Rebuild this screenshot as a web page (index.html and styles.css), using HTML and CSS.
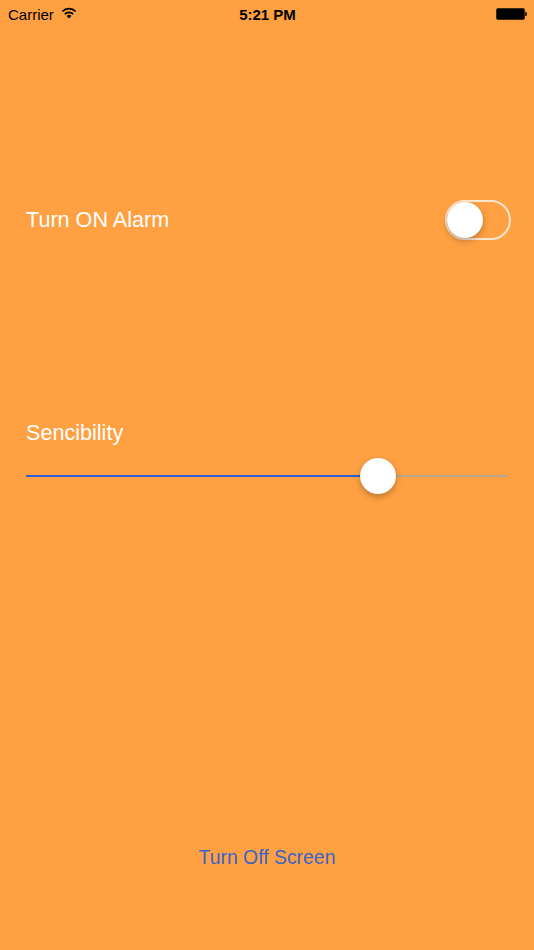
FILE: index.html
```html
<!DOCTYPE html>
<html lang="en">
<head>
    <meta charset="UTF-8">
    <meta name="viewport" content="width=device-width, initial-scale=1.0">
    <title>Alarm</title>
    <link rel="stylesheet" href="styles.css">
</head>
<body>
    <div class="status-bar">
        <div class="status-left">
            <span>Carrier</span>
            <svg class="wifi" width="16" height="12" viewBox="0 0 16 12">
                <path d="M8 11.5 L5.6 8.9 A3.4 3.4 0 0 1 10.4 8.9 Z" fill="#000"/>
                <path d="M3.7 7.1 A6.1 6.1 0 0 1 12.3 7.1" stroke="#000" stroke-width="1.7" fill="none"/>
                <path d="M1.3 4.5 A9.4 9.4 0 0 1 14.7 4.5" stroke="#000" stroke-width="1.7" fill="none"/>
            </svg>
        </div>
        <div class="status-time">5:21 PM</div>
        <div class="status-right">
            <div class="battery"></div>
            <div class="battery-nub"></div>
        </div>
    </div>

    <div class="content">
        <div class="row alarm-row">
            <span class="label">Turn ON Alarm</span>
            <div class="switch">
                <div class="switch-knob"></div>
            </div>
        </div>

        <div class="sensitivity">
            <span class="label">Sencibility</span>
            <div class="slider">
                <div class="slider-fill" style="width: 73%;"></div>
                <div class="slider-rest"></div>
                <div class="slider-thumb" style="left: 73%;"></div>
            </div>
        </div>

        <div class="bottom">
            <button class="link-btn">Turn Off Screen</button>
        </div>
    </div>
</body>
</html>
```

FILE: styles.css
```css
body {
    margin: 0;
    height: 950px;
    background-color: #ffa142;
    font-family: 'Liberation Sans', Arial, sans-serif;
    color: #fff;
    overflow: hidden;
    display: flex;
    flex-direction: column;
}

.status-bar {
    height: 28px;
    display: flex;
    align-items: center;
    justify-content: space-between;
    padding: 0 7px 0 8px;
    color: #000;
    font-size: 15px;
}

.status-left {
    display: flex;
    align-items: center;
    gap: 7px;
    width: 120px;
}

.wifi {
    margin-top: -2px;
}

.status-time {
    font-weight: bold;
    font-size: 15px;
}

.status-right {
    width: 120px;
    display: flex;
    justify-content: flex-end;
    align-items: center;
}

.battery {
    width: 27px;
    height: 10px;
    background: #000;
    border: 1px solid #3a2a10;
    border-radius: 2px;
}

.battery-nub {
    width: 2px;
    height: 4px;
    background: #3a2a10;
    border-radius: 0 1px 1px 0;
}

.content {
    flex: 1;
    display: flex;
    flex-direction: column;
    padding: 0 23px 0 26px;
}

.label {
    font-size: 21.6px;
    line-height: 24px;
}

.alarm-row {
    margin-top: 172px;
    display: flex;
    justify-content: space-between;
    align-items: center;
}

.switch {
    width: 62px;
    height: 36px;
    border: 2px solid rgba(255, 255, 255, 0.75);
    border-radius: 20px;
    position: relative;
}

.switch-knob {
    position: absolute;
    left: 0;
    top: 0;
    width: 36px;
    height: 36px;
    border-radius: 50%;
    background: #fff;
    box-shadow: 0 3px 6px rgba(0, 0, 0, 0.25), 0 0 1px rgba(0, 0, 0, 0.2);
}

.sensitivity {
    margin-top: 181px;
    padding-right: 3px;
}

.slider {
    position: relative;
    height: 2px;
    margin-top: 30px;
    display: flex;
}

.slider-fill {
    height: 2px;
    background: #2f5fd6;
}

.slider-rest {
    flex: 1;
    height: 2px;
    background: #b7a58d;
}

.slider-thumb {
    position: absolute;
    top: -17px;
    width: 36px;
    height: 36px;
    margin-left: -18px;
    border-radius: 50%;
    background: #fff;
    box-shadow: 0 3px 6px rgba(0, 0, 0, 0.25), 0 0 1px rgba(0, 0, 0, 0.2);
}

.bottom {
    margin-top: auto;
    margin-bottom: 82px;
    display: flex;
    justify-content: center;
    padding-right: 3px;
}

.link-btn {
    background: none;
    border: none;
    padding: 0;
    font-family: 'Liberation Sans', Arial, sans-serif;
    font-size: 19.4px;
    line-height: 22px;
    color: #3a63c8;
    cursor: pointer;
}
```
